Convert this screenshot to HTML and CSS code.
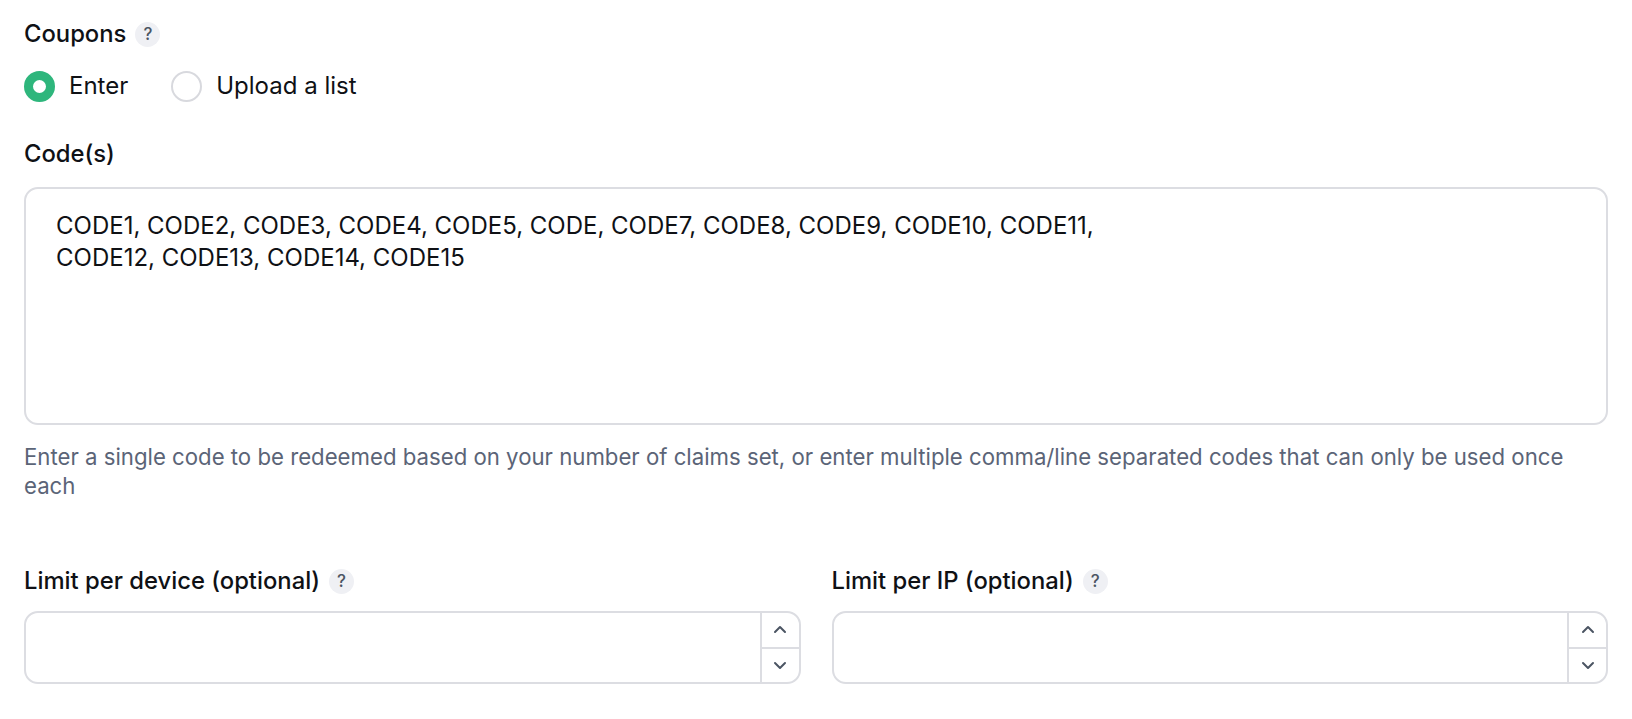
FILE: index.html
```html
<!DOCTYPE html>
<html>
<head>
<meta charset="utf-8">
<link rel="stylesheet" href="styles.css">
</head>
<body>
<div class="page">
  <div class="label-row">
    <span class="label">Coupons</span>
    <span class="help-badge">?</span>
  </div>
  <div class="radio-group">
    <label class="radio-item"><span class="radio checked"></span><span class="radio-text">Enter</span></label>
    <label class="radio-item"><span class="radio"></span><span class="radio-text">Upload a list</span></label>
  </div>
  <div class="label-row codes-label">
    <span class="label">Code(s)</span>
  </div>
  <div class="textarea">CODE1, CODE2, CODE3, CODE4, CODE5, CODE, CODE7, CODE8, CODE9, CODE10, CODE11,<br>CODE12, CODE13, CODE14, CODE15</div>
  <p class="hint">Enter a single code to be redeemed based on your number of claims set, or enter multiple comma/line separated codes that can only be used once each</p>
  <div class="limits">
    <div class="field">
      <div class="label-row">
        <span class="label">Limit per device (optional)</span>
        <span class="help-badge">?</span>
      </div>
      <div class="number-input">
        <div class="number-value"></div>
        <div class="spinner">
          <div class="spin-btn"><svg width="14" height="9" viewBox="0 0 14 9"><path d="M2 7 L7 2 L12 7" fill="none" stroke="#4b5563" stroke-width="2" stroke-linecap="round" stroke-linejoin="round"/></svg></div>
          <div class="spin-btn bottom"><svg width="14" height="9" viewBox="0 0 14 9"><path d="M2 2 L7 7 L12 2" fill="none" stroke="#4b5563" stroke-width="2" stroke-linecap="round" stroke-linejoin="round"/></svg></div>
        </div>
      </div>
    </div>
    <div class="field">
      <div class="label-row">
        <span class="label">Limit per IP (optional)</span>
        <span class="help-badge">?</span>
      </div>
      <div class="number-input">
        <div class="number-value"></div>
        <div class="spinner">
          <div class="spin-btn"><svg width="14" height="9" viewBox="0 0 14 9"><path d="M2 7 L7 2 L12 7" fill="none" stroke="#4b5563" stroke-width="2" stroke-linecap="round" stroke-linejoin="round"/></svg></div>
          <div class="spin-btn bottom"><svg width="14" height="9" viewBox="0 0 14 9"><path d="M2 2 L7 7 L12 2" fill="none" stroke="#4b5563" stroke-width="2" stroke-linecap="round" stroke-linejoin="round"/></svg></div>
        </div>
      </div>
    </div>
  </div>
</div>
</body>
</html>
```
FILE: styles.css
```css
* { box-sizing: border-box; }
html, body { margin: 0; padding: 0; background: #ffffff; }
body {
  font-family: Inter, "Noto Sans", "Liberation Sans", sans-serif;
  color: #0f1115;
}
.page {
  padding: 18px 24px 0 24px;
}
.label-row {
  display: flex;
  align-items: center;
  gap: 9px;
  height: 32px;
}
.label {
  font-size: 23.8px;
  font-weight: 500;
  line-height: 32px;
  color: #0f1115;
}
.help-badge {
  width: 25px;
  height: 25px;
  border-radius: 50%;
  background: #eff0f4;
  color: #4b5563;
  font-size: 17px;
  font-weight: 500;
  display: flex;
  align-items: center;
  justify-content: center;
}
.radio-group {
  display: flex;
  gap: 43px;
  margin-top: 20px;
  height: 32px;
  align-items: center;
}
.radio-item {
  display: flex;
  align-items: center;
  gap: 14px;
}
.radio {
  width: 31px;
  height: 31px;
  border-radius: 50%;
  border: 2px solid #d8d9de;
  background: #fff;
}
.radio.checked {
  border: 9px solid #2eb67c;
}
.radio-text {
  font-size: 24px;
  line-height: 32px;
  color: #0f1115;
}
.codes-label { margin-top: 36px; }
.textarea {
  margin-top: 17px;
  height: 238px;
  border: 2px solid #dcdde2;
  border-radius: 14px;
  padding: 21px 30px;
  font-size: 24px;
  line-height: 32px;
  color: #0f1115;
}
.hint {
  margin: 17px 0 0 0;
  padding-right: 24px;
  font-size: 22.2px;
  line-height: 29px;
  color: #5b6477;
}
.limits {
  display: grid;
  grid-template-columns: 1fr 1fr;
  column-gap: 31px;
  margin-top: 65px;
}
.number-input {
  margin-top: 14px;
  height: 73px;
  border: 2px solid #dcdde2;
  border-radius: 14px;
  display: flex;
  overflow: hidden;
}
.number-value { flex: 1; }
.spinner {
  width: 39px;
  border-left: 2px solid #dcdde2;
  display: flex;
  flex-direction: column;
}
.spin-btn {
  flex: 1;
  display: flex;
  align-items: center;
  justify-content: center;
}
.spin-btn.bottom { border-top: 2px solid #dcdde2; }
```
